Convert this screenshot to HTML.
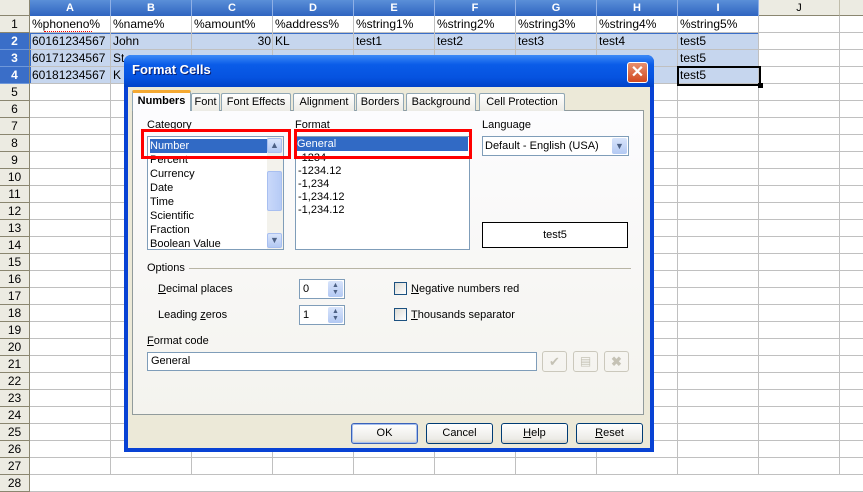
<!DOCTYPE html>
<html><head><style>
*{box-sizing:border-box;margin:0;padding:0}
body{width:863px;height:474px;overflow:hidden;background:#fff;font-family:"Liberation Sans",sans-serif;font-size:11px;position:relative}
.a{position:absolute}
.ch{position:absolute;top:0;height:16px;background:linear-gradient(#5a8fd8,#2f64c0);color:#fff;font-weight:bold;text-align:center;line-height:16px;border-right:1px solid #8fb0e6;font-size:11px}
.rh{position:absolute;left:0;width:30px;height:17px;background:#ecebe2;border-bottom:1px solid #8a8670;border-right:1px solid #8a8670;text-align:center;line-height:17px;font-size:12px;color:#000}
.rh.s{background:#3a6ec8;color:#fff;font-weight:bold;border-bottom:1px solid #6f98da}
.c{position:absolute;height:17px;line-height:17px;font-size:12px;padding-left:2px;white-space:nowrap;overflow:hidden}
.vl{position:absolute;top:16px;width:1px;height:458px;background:#c0c0c0}
.hl{position:absolute;left:30px;width:833px;height:1px;background:#c0c0c0}
.tab{position:absolute;top:93px;height:18px;border:1px solid #91a7b4;border-bottom:none;background:linear-gradient(#fff,#ecebe5);font-size:11px;line-height:16px;text-align:center;border-radius:2px 2px 0 0}
.btn{position:absolute;top:423px;width:67px;height:21px;border:1px solid #003c74;border-radius:3px;background:linear-gradient(#fff,#ecebe6 80%,#d6d0c5);text-align:center;line-height:19px;font-size:11px}
.lb{position:absolute;font-size:11px}
.li{position:absolute;left:2px;font-size:11px;height:14px;line-height:14px}
</style></head><body>
<!-- column headers -->
<div class="a" style="left:0;top:0;width:30px;height:16px;background:#ecebe2;border-right:1px solid #8a8670;border-bottom:1px solid #8a8670"></div>
<div class="ch" style="left:30px;width:81px">A</div>
<div class="ch" style="left:111px;width:81px">B</div>
<div class="ch" style="left:192px;width:81px">C</div>
<div class="ch" style="left:273px;width:81px">D</div>
<div class="ch" style="left:354px;width:81px">E</div>
<div class="ch" style="left:435px;width:81px">F</div>
<div class="ch" style="left:516px;width:81px">G</div>
<div class="ch" style="left:597px;width:81px">H</div>
<div class="ch" style="left:678px;width:81px">I</div>
<div class="a" style="left:759px;top:0;width:81px;height:16px;background:#ecebe2;border-right:1px solid #c0bdab;border-bottom:1px solid #8a8670;text-align:center;line-height:16px">J</div>
<div class="a" style="left:840px;top:0;width:23px;height:16px;background:#ecebe2;border-bottom:1px solid #8a8670"></div>
<!-- selection bg -->
<div class="a" style="left:30px;top:33px;width:729px;height:51px;background:#c6d6ee;border:1px solid #3a6ec8"></div>
<!-- grid -->
<div class="vl" style="left:110px"></div><div class="vl" style="left:191px"></div><div class="vl" style="left:272px"></div><div class="vl" style="left:353px"></div><div class="vl" style="left:434px"></div><div class="vl" style="left:515px"></div><div class="vl" style="left:596px"></div><div class="vl" style="left:677px"></div><div class="vl" style="left:758px"></div><div class="vl" style="left:839px"></div>
<div id="hls"></div>
<script>
var h='',r='';
for(var i=1;i<=28;i++){var t=16+(i-1)*17;h+='<div class="hl" style="top:'+(t+16)+'px"></div>';r+='<div class="rh'+(i>=2&&i<=4?' s':'')+'" style="top:'+t+'px">'+i+'</div>';}
document.getElementById('hls').innerHTML=h+r;
</script>
<!-- cells -->
<div class="c" style="left:30px;top:16px">%phoneno%</div><div class="c" style="left:111px;top:16px">%name%</div><div class="c" style="left:192px;top:16px">%amount%</div><div class="c" style="left:273px;top:16px">%address%</div><div class="c" style="left:354px;top:16px">%string1%</div><div class="c" style="left:435px;top:16px">%string2%</div><div class="c" style="left:516px;top:16px">%string3%</div><div class="c" style="left:597px;top:16px">%string4%</div><div class="c" style="left:678px;top:16px">%string5%</div>
<div class="a" style="left:44px;top:31px;width:48px;border-top:1px dotted #e00"></div>
<div class="c" style="left:30px;top:33px">60161234567</div><div class="c" style="left:111px;top:33px">John</div><div class="c" style="left:192px;top:33px;width:81px;text-align:right;padding-right:2px">30</div><div class="c" style="left:273px;top:33px">KL</div><div class="c" style="left:354px;top:33px">test1</div><div class="c" style="left:435px;top:33px">test2</div><div class="c" style="left:516px;top:33px">test3</div><div class="c" style="left:597px;top:33px">test4</div><div class="c" style="left:678px;top:33px">test5</div>
<div class="c" style="left:30px;top:50px">60171234567</div><div class="c" style="left:111px;top:50px">St</div><div class="c" style="left:678px;top:50px">test5</div>
<div class="c" style="left:30px;top:67px">60181234567</div><div class="c" style="left:111px;top:67px">K</div><div class="c" style="left:678px;top:67px">test5</div>
<div class="a" style="left:677px;top:66px;width:84px;height:20px;border:2px solid #000"></div>
<div class="a" style="left:758px;top:83px;width:5px;height:5px;background:#000"></div>

<!-- dialog -->
<div class="a" style="left:124px;top:55px;width:530px;height:397px;background:#0842d4;border-radius:7px 7px 0 0"></div>
<div class="a" style="left:124px;top:55px;width:530px;height:32px;background:linear-gradient(#3d8af7,#0a5ce8 30%,#0653e0 70%,#0042c8);border-radius:7px 7px 0 0"></div>
<div class="a" style="left:132px;top:62px;color:#fff;font-weight:bold;font-size:13px;text-shadow:1px 1px #0a1e70">Format Cells</div>
<div class="a" style="left:627px;top:62px;width:21px;height:21px;background:linear-gradient(#e8906f,#d2491f);border:1px solid #fff;border-radius:3px;color:#fff;font-weight:bold;font-size:16px;text-align:center;line-height:19px">✕</div>
<div class="a" style="left:128px;top:87px;width:522px;height:361px;background:#ece9d8"></div>
<!-- tab panel -->
<div class="a" style="left:132px;top:110px;width:512px;height:305px;background:linear-gradient(#fcfcfe,#f4f3ee);border:1px solid #919b9c"></div>
<div class="tab" style="left:132px;top:90px;width:59px;height:21px;background:#fcfcfe;border-top:3px solid #f5a931;font-weight:bold;line-height:17px">Numbers</div>
<div class="tab" style="left:191px;width:29px">Font</div>
<div class="tab" style="left:221px;width:70px">Font Effects</div>
<div class="tab" style="left:293px;width:62px">Alignment</div>
<div class="tab" style="left:356px;width:48px">Borders</div>
<div class="tab" style="left:406px;width:70px">Background</div>
<div class="tab" style="left:479px;width:86px">Cell Protection</div>

<div class="lb" style="left:147px;top:119px">Category</div>
<div class="lb" style="left:295px;top:119px">Format</div>
<div class="lb" style="left:482px;top:119px">Language</div>
<!-- category list -->
<div class="a" style="left:147px;top:136px;width:137px;height:114px;background:#fff;border:1px solid #7f9db9">
<div class="li" style="top:2px;width:117px;background:#316ac5;color:#fff">Number</div>
<div class="li" style="top:16px">Percent</div><div class="li" style="top:30px">Currency</div><div class="li" style="top:44px">Date</div><div class="li" style="top:58px">Time</div><div class="li" style="top:72px">Scientific</div><div class="li" style="top:86px">Fraction</div><div class="li" style="top:100px">Boolean Value</div>
<div class="a" style="left:119px;top:0;width:16px;height:112px;background:#f3f2ec"></div>
<div class="a" style="left:119px;top:1px;width:15px;height:15px;background:linear-gradient(#d8e4fb,#b3c9f3);border:1px solid #a8bff0;border-radius:2px;font-size:9px;text-align:center;color:#4d6185;line-height:13px">▲</div>
<div class="a" style="left:119px;top:34px;width:15px;height:40px;background:linear-gradient(90deg,#c9d8fa,#b6cbf6);border:1px solid #a8bff0;border-radius:2px"></div>
<div class="a" style="left:119px;top:96px;width:15px;height:15px;background:linear-gradient(#d8e4fb,#b3c9f3);border:1px solid #a8bff0;border-radius:2px;font-size:9px;text-align:center;color:#4d6185;line-height:13px">▼</div>
</div>
<!-- format list -->
<div class="a" style="left:295px;top:136px;width:175px;height:114px;background:#fff;border:1px solid #7f9db9">
<div class="li" style="top:0px;left:1px;width:171px;background:#316ac5;color:#fff">General</div>
<div class="li" style="top:14px">-1234</div><div class="li" style="top:27px">-1234.12</div><div class="li" style="top:40px">-1,234</div><div class="li" style="top:53px">-1,234.12</div><div class="li" style="top:66px">-1,234.12</div>
</div>
<!-- red boxes -->
<div class="a" style="left:141px;top:129px;width:150px;height:30px;border:3px solid #f00"></div>
<div class="a" style="left:294px;top:129px;width:178px;height:30px;border:3px solid #f00"></div>
<!-- language -->
<div class="a" style="left:482px;top:136px;width:147px;height:20px;background:#fff;border:1px solid #7f9db9;padding-left:2px;line-height:18px">Default - English (USA)
<div class="a" style="right:1px;top:1px;width:15px;height:16px;background:linear-gradient(#d8e4fb,#b3c9f3);border-radius:2px;font-size:9px;text-align:center;color:#4d6185;line-height:16px">▼</div></div>
<div class="a" style="left:482px;top:222px;width:146px;height:26px;background:#fff;border:1px solid #000;text-align:center;line-height:24px">test5</div>
<!-- options -->
<div class="lb" style="left:147px;top:262px">Options</div>
<div class="a" style="left:189px;top:268px;width:442px;height:1px;background:#b8b5a5"></div>
<div class="lb" style="left:158px;top:283px"><u>D</u>ecimal places</div>
<div class="lb" style="left:158px;top:309px">Leading <u>z</u>eros</div>
<div class="a" style="left:299px;top:279px;width:46px;height:20px;background:#fff;border:1px solid #7f9db9;padding-left:3px;line-height:18px">0<div class="a" style="right:1px;top:1px;width:15px;height:16px;background:linear-gradient(#d8e4fb,#b3c9f3);border-radius:2px;font-size:7px;text-align:center;color:#4d6185;line-height:7px;padding-top:1px">▲<br>▼</div></div>
<div class="a" style="left:299px;top:305px;width:46px;height:20px;background:#fff;border:1px solid #7f9db9;padding-left:3px;line-height:18px">1<div class="a" style="right:1px;top:1px;width:15px;height:16px;background:linear-gradient(#d8e4fb,#b3c9f3);border-radius:2px;font-size:7px;text-align:center;color:#4d6185;line-height:7px;padding-top:1px">▲<br>▼</div></div>
<div class="a" style="left:394px;top:282px;width:13px;height:13px;border:1px solid #1c5180;background:linear-gradient(135deg,#dcdbd5,#fff)"></div>
<div class="lb" style="left:411px;top:283px"><u>N</u>egative numbers red</div>
<div class="a" style="left:394px;top:308px;width:13px;height:13px;border:1px solid #1c5180;background:linear-gradient(135deg,#dcdbd5,#fff)"></div>
<div class="lb" style="left:411px;top:309px"><u>T</u>housands separator</div>
<div class="lb" style="left:147px;top:335px"><u>F</u>ormat code</div>
<div class="a" style="left:147px;top:352px;width:390px;height:19px;background:#fff;border:1px solid #7f9db9;padding-left:3px;line-height:17px">General</div>
<div class="a" style="left:542px;top:351px;width:25px;height:21px;border:1px solid #cbc8bc;border-radius:3px;color:#c5c2b5;text-align:center;line-height:19px;font-size:13px">✔</div>
<div class="a" style="left:573px;top:351px;width:25px;height:21px;border:1px solid #cbc8bc;border-radius:3px;color:#c5c2b5;text-align:center;line-height:19px;font-size:12px">▤</div>
<div class="a" style="left:604px;top:351px;width:25px;height:21px;border:1px solid #cbc8bc;border-radius:3px;color:#c5c2b5;text-align:center;line-height:19px;font-size:13px;font-weight:bold">✖</div>
<!-- buttons -->
<div class="btn" style="left:351px;border-color:#3a62b9;box-shadow:inset 0 0 0 1px #a7c0ee">OK</div>
<div class="btn" style="left:426px">Cancel</div>
<div class="btn" style="left:501px"><u>H</u>elp</div>
<div class="btn" style="left:576px"><u>R</u>eset</div>
</body></html>
